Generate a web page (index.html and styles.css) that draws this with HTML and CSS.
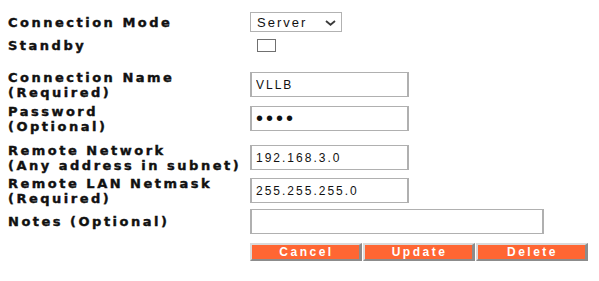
FILE: index.html
```html
<!DOCTYPE html>
<html lang="en">
<head>
    <meta charset="UTF-8">
    <meta name="viewport" content="width=device-width, initial-scale=1.0">
    <title>Connection Settings</title>
    <link rel="stylesheet" href="styles.css">
</head>
<body>
    <form class="conn-form">
        <div class="row row-center row-mode">
            <label class="field-label" for="mode">Connection Mode</label>
            <div class="select-wrap">
                <select class="mode-select" id="mode">
                    <option>Server</option>
                    <option>Client</option>
                </select>
                <svg class="chevron" width="11" height="6" viewBox="0 0 11 6">
                    <polyline points="1,1 5.5,4.8 10,1" fill="none" stroke="#3a3a3a" stroke-width="1.8"/>
                </svg>
            </div>
        </div>

        <div class="row row-center row-standby">
            <label class="field-label" for="standby">Standby</label>
            <input type="checkbox" class="check" id="standby">
        </div>

        <div class="row row-name">
            <label class="field-label" for="conn-name">Connection Name<br>(Required)</label>
            <input type="text" class="text-field" id="conn-name" value="VLLB">
        </div>

        <div class="row row-pass">
            <label class="field-label" for="password">Password<br>(Optional)</label>
            <input type="password" class="text-field pass-field" id="password" value="abcd">
        </div>

        <div class="row row-network">
            <label class="field-label" for="network">Remote Network<br>(Any address in subnet)</label>
            <input type="text" class="text-field" id="network" value="192.168.3.0">
        </div>

        <div class="row row-mask">
            <label class="field-label" for="netmask">Remote LAN Netmask<br>(Required)</label>
            <input type="text" class="text-field" id="netmask" value="255.255.255.0">
        </div>

        <div class="row row-center row-notes">
            <label class="field-label" for="notes">Notes (Optional)</label>
            <input type="text" class="text-field notes-field" id="notes" value="">
        </div>

        <div class="actions">
            <button type="button" class="btn">Cancel</button>
            <button type="button" class="btn">Update</button>
            <button type="button" class="btn">Delete</button>
        </div>
    </form>
</body>
</html>
```

FILE: styles.css
```css
body {
    margin: 0;
    background-color: #ffffff;
    font-family: "DejaVu Sans", Verdana, sans-serif;
    color: #111111;
}

.conn-form {
    padding: 12px 0 0 8px;
}

.row {
    display: flex;
    align-items: flex-start;
}

.row-center {
    align-items: center;
}

.row-standby {
    height: 16px;
    margin-top: 5px;
}

.row-name {
    margin-top: 17px;
}

.row-pass {
    margin-top: 4px;
}

.row-network {
    margin-top: 9px;
}

.row-mask,
.row-notes {
    margin-top: 3px;
}

.field-label {
    flex: none;
    width: 242px;
    font-size: 13px;
    font-weight: bold;
    line-height: 15px;
    letter-spacing: 2.5px;
    color: #111111;
    -webkit-text-stroke: 0.4px #111111;
}

.select-wrap {
    position: relative;
}

.mode-select {
    appearance: none;
    -webkit-appearance: none;
    box-sizing: border-box;
    display: block;
    width: 92px;
    height: 20px;
    margin: 0;
    padding: 0 0 0 6px;
    border: 1px solid #b2b2b2;
    border-radius: 0;
    background-color: #ffffff;
    font-family: "Liberation Sans", Arial, sans-serif;
    font-size: 13px;
    letter-spacing: 2px;
    color: #111111;
}

.chevron {
    position: absolute;
    top: 8px;
    right: 6px;
    pointer-events: none;
}

.check {
    appearance: none;
    -webkit-appearance: none;
    box-sizing: border-box;
    width: 19px;
    height: 13px;
    margin: 0 0 0 7px;
    border: 1px solid #707070;
    background-color: #ffffff;
}

.text-field {
    box-sizing: border-box;
    width: 159px;
    height: 25px;
    margin: 2px 0 0 0;
    padding: 0 0 0 4px;
    border: 1px solid #b0b0b0;
    border-left-width: 2px;
    border-right-width: 2px;
    border-radius: 0;
    background-color: #ffffff;
    font-family: "Liberation Sans", Arial, sans-serif;
    font-size: 12px;
    letter-spacing: 2px;
    color: #111111;
    outline: none;
}

.pass-field {
    font-size: 20px;
    letter-spacing: 3px;
}

.notes-field {
    width: 294px;
    margin-top: 0;
}

.actions {
    display: flex;
    gap: 1px;
    margin: 9px 0 0 242px;
}

.btn {
    box-sizing: border-box;
    width: 112px;
    height: 18px;
    padding: 0 0 0 2px;
    border: 2px solid;
    border-color: #dadada #8c8c8c #8c8c8c #dadada;
    border-right-width: 3px;
    background-color: #ff6633;
    color: #ffffff;
    font-family: "Liberation Sans", Arial, sans-serif;
    font-size: 12px;
    font-weight: bold;
    letter-spacing: 2.5px;
    line-height: 14px;
    cursor: pointer;
}
```
